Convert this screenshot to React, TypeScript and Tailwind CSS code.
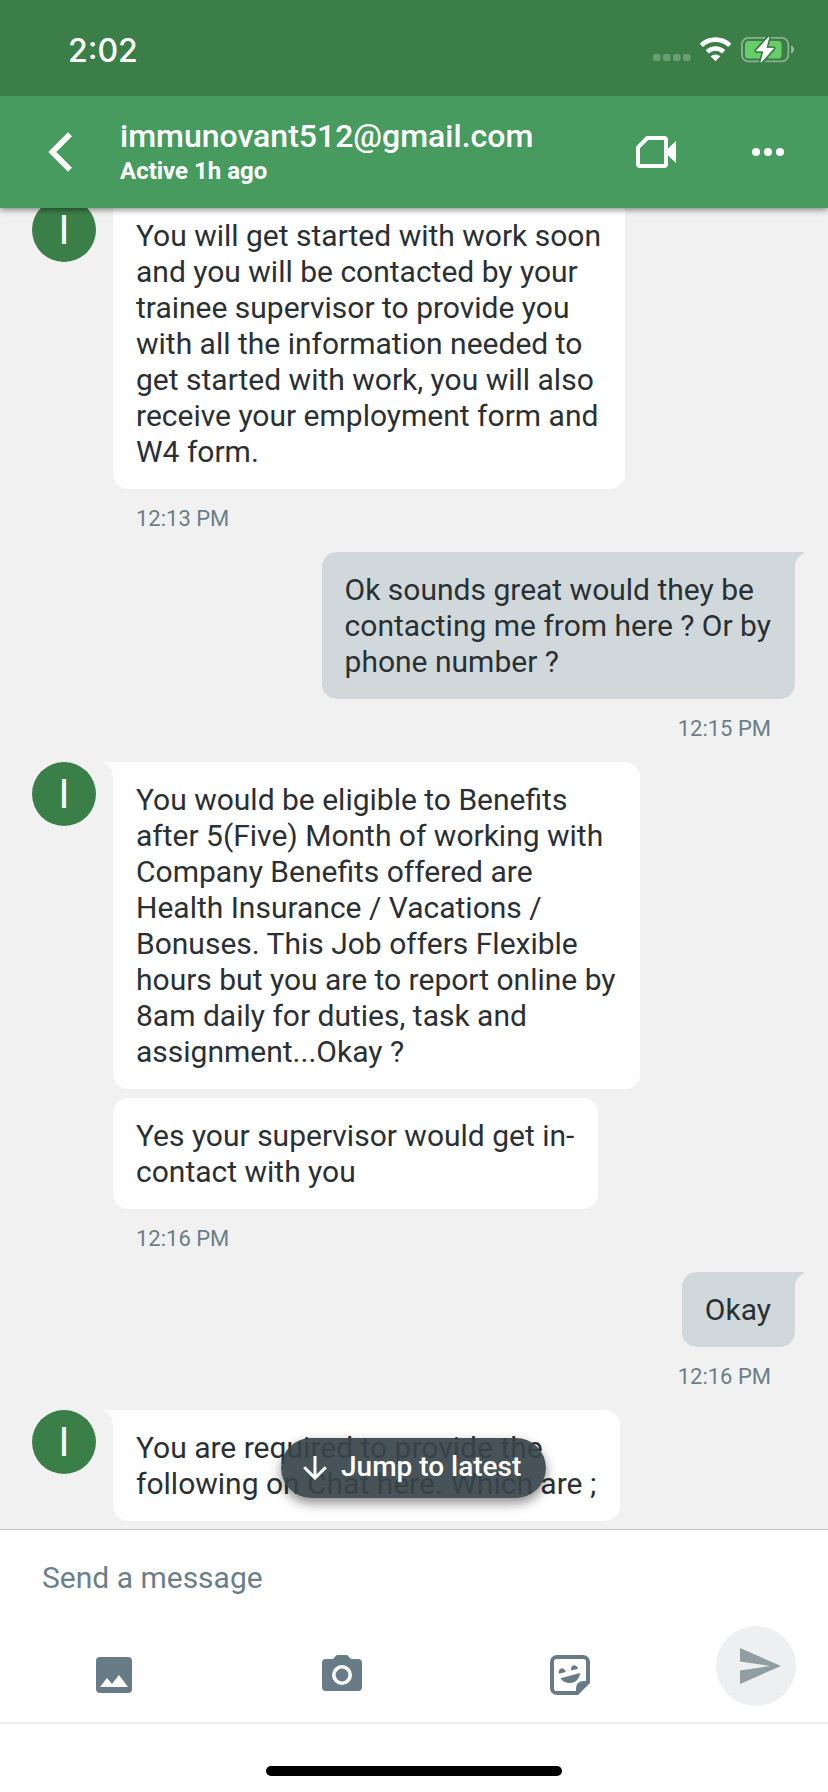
import type { ReactNode } from "react";

/* ===== Types ===== */
type Message = {
  text: string;
  tail?: boolean;
};

type Group = {
  from: "them" | "me";
  messages: Message[];
  time?: string;
};

/* ===== Conversation ===== */
const groups: Group[] = [
  {
    from: "them",
    time: "12:13 PM",
    messages: [
      {
        tail: true,
        text: "You will get started with work soon\nand you will be contacted by your\ntrainee supervisor to provide you\nwith all the information needed to\nget started with work, you will also\nreceive your employment form and\nW4 form.",
      },
    ],
  },
  {
    from: "me",
    time: "12:15 PM",
    messages: [
      {
        tail: true,
        text: "Ok sounds great would they be\ncontacting me from here ? Or by\nphone number ?",
      },
    ],
  },
  {
    from: "them",
    time: "12:16 PM",
    messages: [
      {
        tail: true,
        text: "You would be eligible to Benefits\nafter 5(Five) Month of working with\nCompany Benefits offered are\nHealth Insurance / Vacations /\nBonuses. This Job offers Flexible\nhours but you are to report online by\n8am daily for duties, task and\nassignment...Okay ?",
      },
      { text: "Yes your supervisor would get in-\ncontact with you" },
    ],
  },
  {
    from: "me",
    time: "12:16 PM",
    messages: [{ tail: true, text: "Okay" }],
  },
  {
    from: "them",
    messages: [
      {
        tail: true,
        text: "You are required to provide the\nfollowing on Chat here. Which are ;",
      },
    ],
  },
];

/* ===== Status bar icons ===== */
const StatusIcons = () => (
  <svg width="144" height="32" viewBox="652 34 144 32" fill="none">
    <g fill="#fff" fillOpacity="0.25">
      <rect x="653" y="54" width="7.5" height="7" rx="2" />
      <rect x="663" y="54" width="7.5" height="7" rx="2" />
      <rect x="673" y="54" width="7.5" height="7" rx="2" />
      <rect x="683" y="54" width="7.5" height="7" rx="2" />
    </g>
    <g stroke="#fff" strokeWidth="4.6">
      <path d="M701.3 45.3a20.5 20.5 0 0 1 28.4 0" />
      <path d="M707.3 51.7a12 12 0 0 1 16.4 0" />
    </g>
    <path d="M710.6 56.3a7.4 7.4 0 0 1 9.8 0L715.5 61.2z" fill="#fff" />
    <rect x="741.9" y="37.9" width="46.4" height="23.4" rx="6.5" stroke="#fff" strokeOpacity="0.4" strokeWidth="1.8" />
    <rect x="745" y="41" width="36.5" height="17.4" rx="3.5" fill="#67ce67" />
    <path d="M791.2 45.6c3.6 1.4 3.6 6.6 0 8z" fill="#fff" fillOpacity="0.5" />
    <path
      d="M768.8 37.2 756.6 50.8h7.4l-3 11.4 12.4-13.8h-7.6z"
      fill="#fff"
      stroke="#3b7e48"
      strokeWidth="4.4"
      strokeLinejoin="round"
      paintOrder="stroke"
    />
    <path d="M768.8 37.2 756.6 50.8h7.4l-3 11.4 12.4-13.8h-7.6z" fill="#fff" stroke="#fff" strokeLinejoin="round" />
  </svg>
);

const BackIcon = () => (
  <svg width="24" height="40" viewBox="0 0 24 40" fill="none">
    <path d="M22 2.3 4.3 20 22 37.7" stroke="#fff" strokeWidth="5.6" />
  </svg>
);

const VideoIcon = () => (
  <svg width="40" height="32" viewBox="0 0 40 32">
    <path d="M11.3 2H28a2 2 0 0 1 2 2v24a2 2 0 0 1-2 2H4a2 2 0 0 1-2-2V11.3z" fill="none" stroke="#fff" strokeWidth="4" strokeLinejoin="round" />
    <path d="M40 5v22l-9-8.500V13.500z" fill="#fff" />
  </svg>
);

const MoreIcon = () => (
  <svg width="32" height="8" viewBox="0 0 32 8" fill="#fff">
    <circle cx="4" cy="4" r="4" />
    <circle cx="16" cy="4" r="4" />
    <circle cx="28" cy="4" r="4" />
  </svg>
);

/* ===== Composer icons ===== */
const ImageIcon = () => (
  <svg width="40" height="40" viewBox="0 0 40 40">
    <rect x="2" y="2" width="36" height="36" rx="4" fill="#677c87" />
    <path d="M6 32 13 23l5 6 7-9 9 12z" fill="#fff" />
  </svg>
);

const CameraIcon = () => (
  <svg width="40" height="40" viewBox="0 0 40 40">
    <path d="M4 4h7l3-3.200A2.500 2.500 0 0 1 16 0h8a2.500 2.500 0 0 1 2 .8L29 4h7a4 4 0 0 1 4 4v24a4 4 0 0 1-4 4H4a4 4 0 0 1-4-4V8a4 4 0 0 1 4-4z" fill="#677c87" />
    <circle cx="20" cy="20" r="8.200" fill="none" stroke="#fff" strokeWidth="3.600" />
  </svg>
);

const StickerIcon = () => (
  <svg width="40" height="40" viewBox="0 0 40 40" fill="#677c87">
    <path
      fillRule="evenodd"
      d="M7 0h26a7 7 0 0 1 7 7v21L28 40H7a7 7 0 0 1-7-7V7a7 7 0 0 1 7-7zm-.2 4A2.800 2.800 0 0 0 4 6.800v26.400A2.800 2.800 0 0 0 6.800 36H26v-3a7 7 0 0 1 7-7h3V6.800A2.800 2.800 0 0 0 33.200 4z"
    />
    <path d="M8.800 18.800a3.600 4.600 -15 0 1 7-1.800z" />
    <path d="M21.200 15.600a3.600 4.600 -15 0 1 7-1.800z" />
    <path d="M10.500 23.200 30 18c-.2 5.500-4.200 10-10 10-4.400 0-7.800-1.800-9.500-4.800z" />
  </svg>
);

const SendIcon = () => (
  <svg width="41" height="36" viewBox="0 0 41 36" fill="#919ea1">
    <path d="M0 0 41 18 0 36V22.500L30 18 0 13.500z" />
  </svg>
);

const ArrowDownIcon = () => (
  <svg width="24" height="24" viewBox="0 0 24 24" fill="none" stroke="#fff" strokeWidth="3">
    <path d="M12 0v21.500M1.200 11.200 12 22l10.800-10.800" />
  </svg>
);

/* ===== Chat parts ===== */
const Avatar = () => (
  <div className="flex size-16 shrink-0 items-center justify-center rounded-full bg-[#3b7f48] pt-px text-[40px] leading-none text-white">
    I
  </div>
);

function Bubble({ from, message }: { from: Group["from"]; message: Message }) {
  const mine = from === "me";
  return (
    <div
      className={[
        "relative w-fit whitespace-pre pt-5 pr-6 pb-[19px] pl-[23px] text-[30px] leading-9 text-[#2a3033]",
        mine ? "bg-[#d0d8db]" : "bg-white",
        message.tail
          ? mine
            ? "rounded-[15px] rounded-tr-none"
            : "rounded-[15px] rounded-tl-none"
          : "rounded-[15px]",
      ].join(" ")}
    >
      {message.text}
      {message.tail && (
        <svg
          width="10"
          height="15"
          viewBox="0 0 10 15"
          className={mine ? "absolute top-0 left-full" : "absolute top-0 right-full -scale-x-100"}
        >
          <path d="M0 0h9.500v1C4 3.500 0 8 0 15z" fill={mine ? "#d0d8db" : "#fff"} />
        </svg>
      )}
    </div>
  );
}

function Stamp({ children }: { children: ReactNode }) {
  return (
    <div className="flex h-[63px] items-start pt-[17px] pr-6 pl-[23px] text-[22px] leading-[26px] text-[#6b7f88]">
      {children}
    </div>
  );
}

export default function App() {
  return (
    <div className="flex h-[1792px] w-[828px] flex-col overflow-hidden bg-[#f1f1f1] font-['Roboto',sans-serif]">
      {/* Status bar */}
      <div className="z-20 flex h-24 shrink-0 items-start justify-between bg-[#3b7e48] pt-[34px] pr-8 pl-[68px]">
        <span className="pt-px font-['Inter',sans-serif] text-[32px] leading-8 font-medium text-white">
          2:02
        </span>
        <StatusIcons />
      </div>

      {/* Header */}
      <header className="z-10 flex h-28 shrink-0 items-center bg-[#479b5f] pr-11 pl-12 text-white shadow-[0_2px_6px_rgba(0,0,0,0.45)]">
        <button aria-label="Back">
          <BackIcon />
        </button>
        <div className="ml-12 flex flex-1 flex-col">
          <span className="text-[32px] leading-9 font-medium">immunovant512@gmail.com</span>
          <span className="pt-px text-[24px] leading-8 font-bold">Active 1h ago</span>
        </div>
        <button aria-label="Video call" className="mr-[76px]">
          <VideoIcon />
        </button>
        <button aria-label="More options">
          <MoreIcon />
        </button>
      </header>

      {/* Messages */}
      <main className="relative flex flex-1 flex-col justify-end overflow-hidden pr-[33px] pb-2 pl-8">
        {groups.map((group, i) =>
          group.from === "them" ? (
            <div key={i} className="flex shrink-0 items-start gap-[17px]">
              <Avatar />
              <div className="flex flex-col">
                <div className="flex flex-col gap-[9px]">
                  {group.messages.map((message) => (
                    <Bubble key={message.text} from="them" message={message} />
                  ))}
                </div>
                {group.time && <Stamp>{group.time}</Stamp>}
              </div>
            </div>
          ) : (
            <div key={i} className="flex shrink-0 flex-col items-end">
              {group.messages.map((message) => (
                <Bubble key={message.text} from="me" message={message} />
              ))}
              {group.time && <Stamp>{group.time}</Stamp>}
            </div>
          )
        )}

        {/* Jump to latest */}
        <button className="absolute bottom-[31px] left-[281px] flex h-[60px] w-[265px] items-center rounded-full bg-[#37444a]/92 pl-[22px] text-[28px] font-medium text-white shadow-[0_5px_12px_rgba(0,0,0,0.45)]">
          <ArrowDownIcon />
          <span className="ml-[14px] pb-0.5">Jump to latest</span>
        </button>
      </main>

      {/* Composer */}
      <footer className="flex h-[263px] shrink-0 flex-col border-t border-[#c4c4c4] bg-white">
        <div className="flex h-[80px] items-start pt-[30px] pl-[42px] text-[30px] leading-9 text-[#6b7f88]">
          Send a message
        </div>
        <div className="flex h-28 items-start pr-8 pl-[94px]">
          <button aria-label="Attach image" className="mt-[45px]">
            <ImageIcon />
          </button>
          <button aria-label="Take photo" className="mt-[45px] ml-[188px]">
            <CameraIcon />
          </button>
          <button aria-label="Stickers" className="mt-[45px] ml-[188px]">
            <StickerIcon />
          </button>
          <button
            aria-label="Send"
            className="mt-4 ml-[126px] flex size-20 items-center justify-center rounded-full bg-[#edeff0] pl-2"
          >
            <SendIcon />
          </button>
        </div>
        <div className="flex flex-1 justify-center border-t-2 border-[#eeeeee] pt-[42px]">
          <div className="h-2.5 w-[296px] rounded-full bg-black" />
        </div>
      </footer>
    </div>
  );
}
